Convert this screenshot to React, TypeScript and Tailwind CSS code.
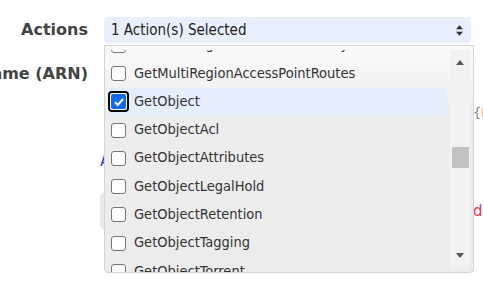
const ACTIONS = [
  "GetMultiRegionAccessPointPolicyStatus",
  "GetMultiRegionAccessPointRoutes",
  "GetObject",
  "GetObjectAcl",
  "GetObjectAttributes",
  "GetObjectLegalHold",
  "GetObjectRetention",
  "GetObjectTagging",
  "GetObjectTorrent",
];

const SELECTED = "GetObject";

const Checkbox = ({ checked }: { checked: boolean }) =>
  checked ? (
    <span className="flex h-[21px] w-[21px] items-center justify-center rounded-[4px] border-2 border-black bg-white">
      <span className="flex h-[15px] w-[15px] items-center justify-center rounded-[2px] bg-[#0b6bf5]">
        <svg viewBox="0 0 12 12" className="h-[12px] w-[12px]">
          <path d="M2 6.2 L4.8 9 L10 3" fill="none" stroke="#fff" strokeWidth="2" />
        </svg>
      </span>
    </span>
  ) : (
    <span className="mx-[3px] h-[15px] w-[15px] rounded-[3px] border border-[#767676] bg-white" />
  );

const App = () => {
  return (
    <div className="relative h-[286px] w-[483px] overflow-hidden bg-white font-['DejaVu_Sans',sans-serif] text-[#333]">
      {/* form behind the open list */}
      <div className="flex flex-col">
        <div className="flex items-center pt-[17px]">
          <div className="flex w-[88px] justify-end whitespace-nowrap text-[16px] font-bold text-[#444]">
            Actions
          </div>
          <div className="ml-[16px] flex h-[26px] w-[367px] items-center justify-between rounded-[4px] bg-[#e8f0fe] pl-[7px] pr-[8px] text-[15px] text-[#222] [font-stretch:condensed]">
            <span>1 Action(s) Selected</span>
            <svg viewBox="0 0 8 12" className="h-[11px] w-[7px]">
              <path d="M4 0 L8 4.5 L0 4.5 Z M0 7.5 L8 7.5 L4 12 Z" fill="#333" />
            </svg>
          </div>
        </div>
        <div className="mt-[19px] flex items-start">
          <div className="flex w-[88px] justify-end whitespace-nowrap text-[16px] font-bold text-[#444]">
            Resource Name (ARN)
          </div>
          <div className="ml-[385px] mt-[41px] whitespace-nowrap text-[13px] text-[#7a7f99]">{"{ET"}</div>
        </div>
        <div className="ml-[100px] mt-[27px] text-[15px] text-[#1a3fd0]">Add</div>
        <div className="mt-[20px] flex items-start">
          <div className="ml-[100px] h-[38px] w-[90px] rounded-[6px] bg-[#e9e9e9]" />
          <div className="ml-[283px] mt-[8px] text-[15px] text-[#ff2a4a]">d</div>
        </div>
      </div>

      {/* open dropdown list */}
      <div className="absolute left-[104px] top-[45px] flex h-[228px] w-[370px] overflow-hidden rounded-b-[4px] border border-[#d4d4d4] bg-gradient-to-b from-[#fafafa] via-[#ededed] via-30% to-[#ececec] [font-stretch:condensed]">
        <div className="flex flex-1 flex-col pt-[4px]">
          <div className="flex-1 overflow-hidden">
            <div className="mt-[-19px] flex flex-col">
              {ACTIONS.map((name) => {
                const checked = name === SELECTED;
                return (
                  <div
                    key={name}
                    className={`mx-[3px] flex h-[28.3px] items-center gap-[5px] whitespace-nowrap rounded-[4px] text-[14.5px] ${
                      checked ? "bg-[#e4eefc]" : ""
                    }`}
                  >
                    <Checkbox checked={checked} />
                    <span>{name}</span>
                  </div>
                );
              })}
            </div>
          </div>
        </div>
        <div className="my-[4px] mr-[3px] flex w-[20px] flex-col items-center bg-[#f1f1f1] pb-[10px] pt-[10px]">
          <svg viewBox="0 0 8 5" className="h-[5px] w-[8px] shrink-0">
            <path d="M4 0 L8 5 L0 5 Z" fill="#555" />
          </svg>
          <div className="mt-[82px] h-[21px] w-[17px] shrink-0 bg-[#c1c1c1]" />
          <div className="flex-1" />
          <svg viewBox="0 0 8 5" className="h-[5px] w-[8px] shrink-0">
            <path d="M0 0 L8 0 L4 5 Z" fill="#555" />
          </svg>
        </div>
      </div>
    </div>
  );
};

export default App;
